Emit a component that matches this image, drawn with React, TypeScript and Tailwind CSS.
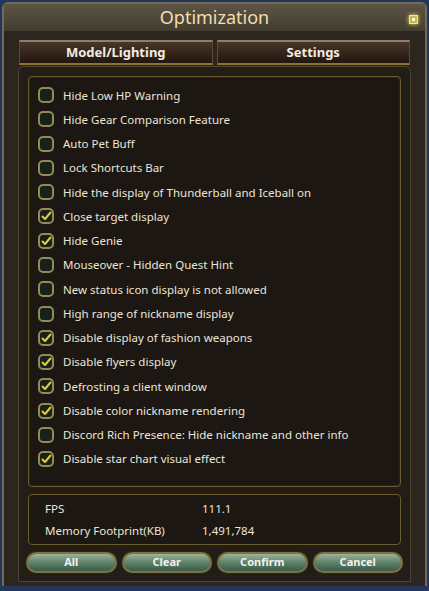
import React from "react";

type Option = { label: string; checked: boolean };

const options: Option[] = [
  { label: "Hide Low HP Warning", checked: false },
  { label: "Hide Gear Comparison Feature", checked: false },
  { label: "Auto Pet Buff", checked: false },
  { label: "Lock Shortcuts Bar", checked: false },
  { label: "Hide the display of Thunderball and Iceball on", checked: false },
  { label: "Close target display", checked: true },
  { label: "Hide Genie", checked: true },
  { label: "Mouseover - Hidden Quest Hint", checked: false },
  { label: "New status icon display is not allowed", checked: false },
  { label: "High range of nickname display", checked: false },
  { label: "Disable display of fashion weapons", checked: true },
  { label: "Disable flyers display", checked: true },
  { label: "Defrosting a client window", checked: true },
  { label: "Disable color nickname rendering", checked: true },
  { label: "Discord Rich Presence: Hide nickname and other info", checked: false },
  { label: "Disable star chart visual effect", checked: true },
];

function Checkbox({ checked }: { checked: boolean }) {
  return (
    <span className="flex h-4 w-4 shrink-0 items-center justify-center rounded-[5px] border-2 border-[#8f8c55] bg-[#17201a]">
      {checked && (
        <svg width="11" height="10" viewBox="0 0 11 10">
          <path d="M1.5 5.5 L4 8 L9.5 1.5" fill="none" stroke="#e6c93c" strokeWidth="2" strokeLinecap="round" strokeLinejoin="round" />
        </svg>
      )}
    </span>
  );
}

function Tab({ label }: { label: string }) {
  return (
    <div className="flex h-[25px] flex-1 items-center justify-center border-x border-b-2 border-t-2 border-x-[#5a4a30] border-b-[#8a7434] border-t-[#8a8070] bg-gradient-to-b from-[#4a3628] to-[#22160f] text-[13px] font-bold text-[#f2ece0]">
      {label}
    </div>
  );
}

function Button({ label }: { label: string }) {
  return (
    <button
      type="button"
      className="flex h-[21px] flex-1 items-center justify-center rounded-full border-2 border-[#7c7242] bg-gradient-to-b from-[#9cb498] via-[#5e826c] to-[#3c5a48] text-[11px] font-bold text-[#f4f2ea] shadow-[0_0_0_1px_#2a2418]"
    >
      {label}
    </button>
  );
}

export default function App() {
  return (
    <div
      className="h-[591px] w-[429px] overflow-hidden bg-[#24365c] pt-[2px]"
      style={{ fontFamily: "'Noto Sans', 'DejaVu Sans', sans-serif" }}
    >
      <div className="relative mx-[2px] flex h-[584px] flex-col rounded-t-[6px] border-2 border-[#716a5a] bg-[#3a3228]">
        {/* title bar */}
        <div className="flex h-[30px] items-center justify-center bg-gradient-to-b from-[#5c5544] to-[#433d30] text-[18px] text-[#f3dcb2]">
          Optimization
        </div>
        <div className="absolute right-[7px] top-[11px] flex h-[9px] w-[9px] items-center justify-center border border-[#f0e890] bg-[#c8b850] shadow-[0_0_4px_#f0e070]">
          <span className="h-[3px] w-[3px] bg-[#fffbe0]" />
        </div>

        <div className="flex flex-1 flex-col bg-[#2c261e] px-[14px] pb-[4px] pt-[9px]">
          {/* tabs */}
          <div className="flex gap-[4px] px-[1px]">
            <Tab label="Model/Lighting" />
            <Tab label="Settings" />
          </div>

          {/* frame */}
          <div className="mt-[1px] flex flex-1 flex-col rounded-t-[6px] border border-[#4e4434] bg-[#231d17] px-[9px] pb-[8px] pt-[9px]">
            <div className="flex h-[411px] flex-col rounded-[4px] border border-[#6a5a2c] bg-[#1c1712] pl-[9px] pt-[6px] shadow-[inset_0_0_0_1px_#2a2218]">
              {options.map((o) => (
                <div key={o.label} className="flex h-[24.27px] items-center gap-[9px]">
                  <Checkbox checked={o.checked} />
                  <span className="text-[11.5px] text-[#ece5d6]">{o.label}</span>
                </div>
              ))}
            </div>

            <div className="mt-[7px] grid h-[51px] grid-cols-[157px_1fr] content-center gap-y-[4px] rounded-[4px] border border-[#6a5a2c] bg-[#1c1712] pl-[16px] text-[11.5px] text-[#ece5d6]">
              <span>FPS</span>
              <span>111.1</span>
              <span>Memory Footprint(KB)</span>
              <span>1,491,784</span>
            </div>

            <div className="-mx-[2px] mt-[7px] flex gap-[5px]">
              <Button label="All" />
              <Button label="Clear" />
              <Button label="Confirm" />
              <Button label="Cancel" />
            </div>
          </div>
        </div>
      </div>
    </div>
  );
}
